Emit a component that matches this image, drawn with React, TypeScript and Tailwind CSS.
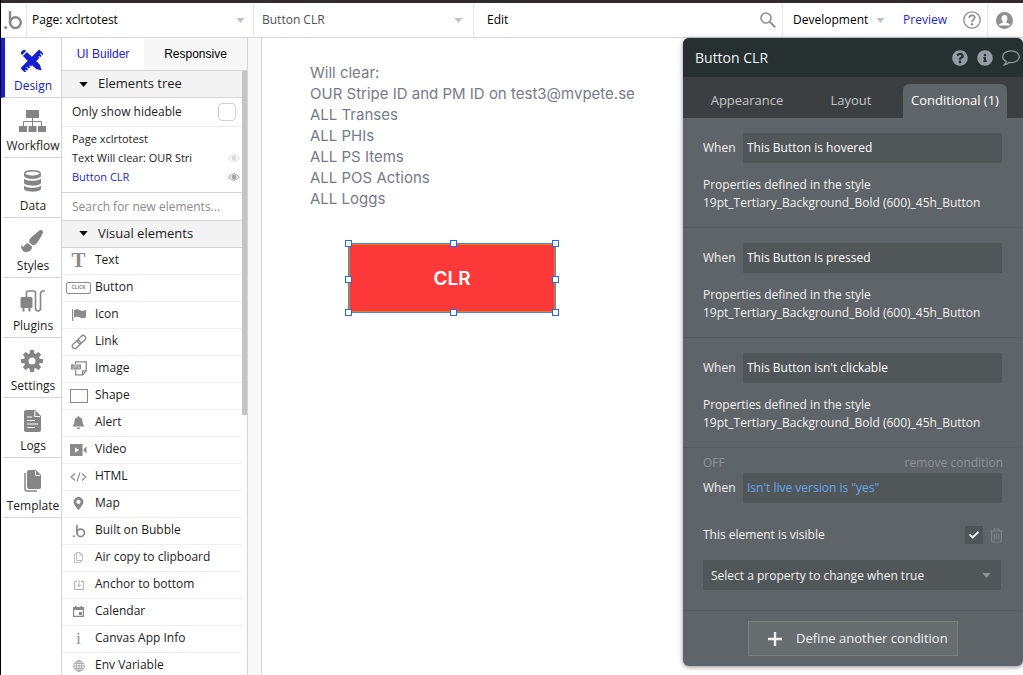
import React, { useState } from "react";
import {
  FaBell,
  FaCheck,
  FaInfoCircle,
  FaMapMarkerAlt,
  FaPaintBrush,
  FaQuestionCircle,
} from "react-icons/fa";

/* ICONS */

const Caret = ({ className = "" }: { className?: string }) => (
  <svg viewBox="0 0 10 6" className={`h-[5px] w-[9px] ${className}`} fill="currentColor">
    <path d="M0 0h10L5 6z" />
  </svg>
);

const BubbleLogo = ({ size = 20 }: { size?: number }) => (
  <svg width={size} height={size} viewBox="0 0 20 20" fill="none" stroke="currentColor">
    <circle cx="12.4" cy="12.6" r="5.4" strokeWidth="2.5" />
    <path d="M7 1v11.6" strokeWidth="2.4" />
    <circle cx="2.7" cy="17.6" r="1.5" fill="currentColor" stroke="none" />
  </svg>
);

const DesignIcon = () => (
  <svg width="22" height="22" viewBox="0 0 22 22" fill="currentColor">
    <g transform="rotate(-45 11 11)">
      <path d="M8.2-1.6q0-1.4 1.4-1.4h2.8q1.4 0 1.4 1.4v1.4H8.2zM8.2 1h5.6v18.6L11 24.6l-2.8-5z" />
    </g>
    <g transform="rotate(45 11 11)">
      <path stroke="#fff" strokeWidth="0.8" d="M7.6-2.6h6.8v27.2H7.6z" />
      <path stroke="#fff" strokeWidth="1" d="M11.5 0h3M12.5 3h2M11.5 19h3M12.5 22h2M12.5 16h2" />
    </g>
    <path transform="rotate(-45 11 11)" d="M8.2 5h5.6v12H8.2z" />
  </svg>
);

const WorkflowIcon = () => (
  <svg width="27" height="22" viewBox="0 0 27 22" fill="currentColor">
    <path d="M7 0h13v8H7zM0 16h8v6H0zM9.500 16h8v6h-8zM19 16h8v6h-8z" />
    <path fill="none" stroke="currentColor" d="M13.500 8v8M4.500 16v-4.500h18V16" />
  </svg>
);

const DataIcon = () => (
  <svg width="17" height="22" viewBox="0 0 17 22" fill="currentColor">
    <path d="M0 3.500v2C0 10 17 10 17 5.500v-2z" />
    <ellipse cx="8.500" cy="3.500" rx="7.700" ry="2.700" fill="#fff" stroke="currentColor" strokeWidth="1.500" />
    <path d="M0 8.500c2 3 15 3 17 0v4c0 4.200-17 4.200-17 0zM0 15.500c2 3 15 3 17 0v3c0 4.200-17 4.200-17 0z" />
  </svg>
);

const PluginsIcon = () => (
  <svg width="25" height="22" viewBox="0 0 25 22" fill="none" stroke="currentColor">
    <rect x="0.5" y="7" width="12" height="11" rx="1.5" fill="currentColor" stroke="none" />
    <path strokeWidth="2" d="M3.5 17v4.500M9.500 17v4.500" />
    <path strokeWidth="1.6" d="M6.500 8V3q0-2 2-2h5q2 0 2 2v15q0 3 2.500 3t2.500-3V4q0-3 3-3H25" />
  </svg>
);

const GearIcon = () => (
  <svg width="22" height="22" viewBox="0 0 22 22">
    <g fill="currentColor">
      <rect x="8.8" y="0" width="4.4" height="22" rx="1.2" />
      <rect x="8.8" y="0" width="4.4" height="22" rx="1.2" transform="rotate(45 11 11)" />
      <rect x="8.8" y="0" width="4.4" height="22" rx="1.2" transform="rotate(90 11 11)" />
      <rect x="8.8" y="0" width="4.4" height="22" rx="1.2" transform="rotate(135 11 11)" />
      <circle cx="11" cy="11" r="8" />
    </g>
    <circle cx="11" cy="11" r="3.5" fill="#fff" />
  </svg>
);

const LogsIcon = () => (
  <svg width="17" height="22" viewBox="0 0 17 22">
    <path fill="currentColor" d="M2 0h9l6 6v14q0 2-2 2H2q-2 0-2-2V2q0-2 2-2z" />
    <path fill="none" stroke="#fff" strokeWidth="1.1" d="M10.800 1v5.500H16M3 7h5M3 10.500h8M3 14h11M3 17.500h8" />
  </svg>
);

const TemplateIcon = () => (
  <svg width="17" height="22" viewBox="0 0 17 22">
    <path fill="none" stroke="currentColor" strokeWidth="1.5" d="M1 3v16.500q0 1.500 1.500 1.500H13" />
    <path fill="currentColor" d="M5 0h7l5 5v12q0 2-2 2H5q-2 0-2-2V2q0-2 2-2z" />
    <path fill="none" stroke="#fff" d="M11.500 1v4.500H16" />
  </svg>
);

const EyeIcon = ({ className = "" }: { className?: string }) => (
  <svg viewBox="0 0 12 8" className={`h-2 w-3 ${className}`} fill="none" stroke="currentColor">
    <path d="M.6 4Q6-2.600 11.400 4 6 10.600.6 4z" />
    <circle cx="6" cy="4" r="2" fill="currentColor" />
  </svg>
);

const FlagIcon = () => (
  <svg width="14" height="12" viewBox="0 0 14 12" fill="currentColor">
    <path d="M0 0h1.200v12H0zM2 1.200q3-1.700 6 0t6-.4v7.400q-3 2-6 .3t-6 .2z" />
  </svg>
);

const LinkIcon = () => (
  <svg width="16" height="16" viewBox="0 0 16 16" fill="none" stroke="currentColor" strokeWidth="1.4">
    <rect x="0.7" y="8" width="9.4" height="5" rx="2.5" transform="rotate(-45 5.4 10.5)" />
    <rect x="5.900" y="3" width="9.400" height="5" rx="2.500" transform="rotate(-45 10.600 5.500)" />
  </svg>
);

const ImageIcon = () => (
  <svg width="16" height="15" viewBox="0 0 16 15" fill="none" stroke="currentColor" strokeWidth="1.3">
    <path d="M4.600 3V.8h10.600v9l-3.500 4H4.600V9M15 9.800h-3.500v3.800" />
    <rect x="0" y="3.5" width="10" height="5" fill="currentColor" stroke="none" />
    <path stroke="#fff" strokeWidth="0.5" d="M2.300 4.500v2.800H1M4 7.500v-3h1.300v1.500H4M8.500 4.800H7v2.400h1.500V6" />
  </svg>
);

const VideoIcon = () => (
  <svg width="17" height="12" viewBox="0 0 17 12" fill="currentColor">
    <path fillRule="evenodd" d="M0 0h12.500v12H0zM5 3.500v5L9 6z" />
    <path d="M13 6l3.500-3.600v7.200z" />
  </svg>
);

const CodeIcon = () => (
  <svg width="17" height="10" viewBox="0 0 17 10" fill="none" stroke="currentColor" strokeWidth="1.1">
    <path d="M5 1.500L1 5l4 3.500M12 1.500L16 5l-4 3.500M10 .5l-3 9" />
  </svg>
);

const ClipboardIcon = () => (
  <svg width="9" height="11" viewBox="0 0 9 11" fill="none" stroke="#b5b5b5" strokeWidth="0.9">
    <path d="M2.500.5h3.500L8.500 3v5.500h-6zM6 .5V3h2.500M2.500 2H.5v8.500h6v-2" />
  </svg>
);

const AnchorIcon = () => (
  <svg width="10" height="10" viewBox="0 0 10 10" fill="none" stroke="#a8a8a8" strokeWidth="0.9">
    <path d="M3 1.500H.5v8h9v-8H7M5 0v6.500M3 4.700l2 2 2-2" />
  </svg>
);

const CalendarIcon = () => (
  <svg width="11" height="11" viewBox="0 0 11 11">
    <path fill="none" stroke="currentColor" strokeWidth="1.2" d="M.6 1.600h9.800v8.800H.6z" />
    <path fill="currentColor" d="M0 1h11v3H0zM2 0h1.500v1H2zM7.500 0H9v1H7.500zM6 6h3v3H6z" />
  </svg>
);

const GlobeIcon = () => (
  <svg width="12" height="12" viewBox="0 0 12 12" fill="none" stroke="#999" strokeWidth="0.8">
    <circle cx="6" cy="6" r="5.3" />
    <ellipse cx="6" cy="6" rx="2.6" ry="5.3" />
    <path d="M6 .7v10.600M.7 6h10.600M1.500 3.400h9M1.500 8.600h9" />
  </svg>
);

const SearchIcon = () => (
  <svg width="16" height="16" viewBox="0 0 16 16" fill="none" stroke="currentColor">
    <circle cx="6" cy="6" r="5" strokeWidth="1.6" />
    <path strokeWidth="2" d="M9.700 9.700l5.500 5.500" />
  </svg>
);

const HelpIcon = () => (
  <svg width="18" height="18" viewBox="0 0 18 18" fill="none" stroke="currentColor">
    <circle cx="9" cy="9" r="8.2" strokeWidth="1.3" />
    <path strokeWidth="1.7" d="M6.200 7q.2-2.700 2.900-2.700 2.600 0 2.600 2.300 0 1.300-1.400 2.200Q9 9.600 9 11" />
    <circle cx="9" cy="13.3" r="1.2" fill="currentColor" stroke="none" />
  </svg>
);

const AvatarIcon = () => (
  <svg width="17" height="17" viewBox="0 0 17 17">
    <circle cx="8.5" cy="8.5" r="8.5" fill="currentColor" />
    <ellipse cx="8.5" cy="6.5" rx="2.9" ry="3.5" fill="#fff" />
    <path fill="#fff" d="M6.900 9h3.200v1.500l3.400 1.500q.8.500.5 1.600H3q-.3-1.100.5-1.600l3.400-1.500z" />
  </svg>
);

const CommentIcon = () => (
  <svg width="18" height="16" viewBox="0 0 18 16" fill="none" stroke="currentColor" strokeWidth="1.3">
    <path d="M4.300 11.400Q.7 9.700.7 6.700C.7 3.300 4.400.8 9 .8s8.300 2.500 8.300 5.900-3.700 5.900-8.300 5.900q-1 0-2-.2-1.700 1.900-4.600 2.400 1.700-1.600 1.900-3.400z" />
  </svg>
);

const TrashIcon = () => (
  <svg width="13" height="15" viewBox="0 0 13 15" fill="none" stroke="currentColor" strokeWidth="1.2">
    <path d="M0 3h13M4.200 3V1h4.600v2M1.600 3v9.500q0 1.500 1.500 1.500h6.800q1.500 0 1.500-1.500V3M4.300 5.500v6M6.500 5.500v6M8.700 5.500v6" />
  </svg>
);

const PlusIcon = () => (
  <svg width="14" height="14" viewBox="0 0 14 14" stroke="currentColor" strokeWidth="2.4">
    <path d="M7 0v14M0 7h14" />
  </svg>
);

/* DATA */

const railItems = [
  { label: "Design", icon: <DesignIcon /> },
  { label: "Workflow", icon: <WorkflowIcon /> },
  { label: "Data", icon: <DataIcon /> },
  { label: "Styles", icon: <FaPaintBrush size={22} /> },
  { label: "Plugins", icon: <PluginsIcon /> },
  { label: "Settings", icon: <GearIcon /> },
  { label: "Logs", icon: <LogsIcon /> },
  { label: "Template", icon: <TemplateIcon /> },
];

const elements = [
  { label: "Text", icon: <span className="font-['Liberation_Serif',serif] text-[21px] font-bold">T</span> },
  {
    label: "Button",
    icon: (
      <span className="flex h-3 w-[25px] items-center justify-center rounded-xs border border-[#8a8a8a] text-[5px] font-bold">
        CLICK
      </span>
    ),
  },
  { label: "Icon", icon: <FlagIcon /> },
  { label: "Link", icon: <LinkIcon /> },
  { label: "Image", icon: <ImageIcon /> },
  { label: "Shape", icon: <span className="h-[14px] w-[18px] border border-[#8a8a8a]" /> },
  { label: "Alert", icon: <FaBell size={13} /> },
  { label: "Video", icon: <VideoIcon /> },
  { label: "HTML", icon: <CodeIcon /> },
  { label: "Map", icon: <FaMapMarkerAlt size={13} /> },
  { label: "Built on Bubble", icon: <BubbleLogo size={14} /> },
  { label: "Air copy to clipboard", icon: <ClipboardIcon /> },
  { label: "Anchor to bottom", icon: <AnchorIcon /> },
  { label: "Calendar", icon: <CalendarIcon /> },
  { label: "Canvas App Info", icon: <span className="font-['Liberation_Serif',serif] text-[16px]">i</span> },
  { label: "Env Variable", icon: <GlobeIcon /> },
];

const styleConditions = ["This Button is hovered", "This Button is pressed", "This Button isn't clickable"];

const clearedItems = [
  "Will clear:",
  "OUR Stripe ID and PM ID on test3@mvpete.se",
  "ALL Transes",
  "ALL PHIs",
  "ALL PS Items",
  "ALL POS Actions",
  "ALL Loggs",
];

const handles = [
  "-left-1 -top-1",
  "left-1/2 -top-1 -ml-0.5",
  "-right-1 -top-1",
  "-left-1 top-1/2 -mt-0.5",
  "-right-1 top-1/2 -mt-0.5",
  "-left-1 -bottom-1",
  "left-1/2 -bottom-1 -ml-0.5",
  "-right-1 -bottom-1",
];

/* SECTIONS */

const TopBar = () => (
  <header className="flex h-[38px] shrink-0 items-stretch border-b border-t-3 border-b-[#d5d5d5] border-t-[#2e2c2d] bg-white text-[12px]">
    <a href="#home" aria-label="Home" className="flex w-[25px] items-center pl-[2px] text-[#8a8a8a]">
      <BubbleLogo size={20} />
    </a>
    <div className="relative flex w-[228px] items-center border-x border-[#e8e8e8]">
      <select aria-label="Page" className="h-full w-full appearance-none pl-[5px] text-black outline-none">
        <option>Page: xclrtotest</option>
      </select>
      <Caret className="pointer-events-none absolute right-2 text-[#b9c5cb]" />
    </div>
    <div className="relative flex w-[220px] items-center border-r border-[#e8e8e8]">
      <select aria-label="Element" className="h-full w-full appearance-none pl-2 text-[#4a5355] outline-none">
        <option>Button CLR</option>
      </select>
      <Caret className="pointer-events-none absolute right-[10px] text-[#b9c5cb]" />
    </div>
    <button className="px-[13px] text-black">Edit</button>
    <button aria-label="Search" className="ml-auto border-r border-[#e8e8e8] pr-[6px] text-[#8f8f8f]">
      <SearchIcon />
    </button>
    <div className="relative flex w-[102px] items-center">
      <select aria-label="Version" className="h-full w-full appearance-none pl-[10px] text-black outline-none">
        <option>Development</option>
      </select>
      <Caret className="pointer-events-none absolute right-0 text-[#b9c5cb]" />
    </div>
    <a href="#preview" className="flex items-center pl-[18px] text-[#2329d6]">
      Preview
    </a>
    <button aria-label="Help" className="ml-4 border-r border-[#e8e8e8] pr-[6px] text-[#8f8f8f]">
      <HelpIcon />
    </button>
    <button aria-label="Account" className="pl-2 pr-[10px] text-[#8f8f8f]">
      <AvatarIcon />
    </button>
  </header>
);

const Rail = () => (
  <nav className="w-[61px] shrink-0 overflow-hidden border-r border-[#d5d5d5]">
    {railItems.map((item, i) => (
      <a
        key={item.label}
        href={`#${item.label.toLowerCase()}`}
        className={`flex h-[60px] flex-col items-center border-b border-l-4 border-b-[#d5d5d5] text-[12px] ${
          i === 0 ? "border-l-[#1420d0] text-[#1420d0]" : "border-l-transparent text-[#858585]"
        }`}
      >
        <span className="mt-3 flex h-[22px] items-center pr-[2px]">{item.icon}</span>
        <span className={`mt-1 leading-5 ${i === 0 ? "" : "text-[#1c1c1c]"}`}>{item.label}</span>
      </a>
    ))}
  </nav>
);

const SectionTitle = ({ children }: { children: React.ReactNode }) => (
  <button className="flex h-[27px] w-full items-center gap-[10px] border-b border-[#d5d5d5] bg-[#f3f3f3] pl-[17px] text-[13px] text-[#1c1c1c]">
    <Caret className="text-black" />
    {children}
  </button>
);

const ElementsPanel = () => {
  const [search, setSearch] = useState("");

  return (
    <aside className="flex w-[186px] shrink-0 flex-col border-r border-[#d5d5d5]">
      <div className="flex h-[33px] shrink-0 border-b border-[#d5d5d5] font-['Liberation_Sans',Arial,sans-serif] text-[12px]">
        <button className="w-[82px] text-[#1c22d4]">UI Builder</button>
        <button className="flex-1 bg-[#f7f7f7] text-black">Responsive</button>
      </div>

      <div className="flex min-h-0 flex-1">
        <div className="min-w-0 flex-1 overflow-hidden">
          <SectionTitle>Elements tree</SectionTitle>

          <label className="flex h-[29px] items-center justify-between border-b border-[#ededed] pl-[10px] pr-[6px] text-[12px]">
            Only show hideable
            <input type="checkbox" className="size-[18px] appearance-none rounded border border-[#d0d0d0]" />
          </label>

          {/* TREE */}
          <ul className="flex h-[66px] flex-col border-b border-[#d5d5d5] pl-[10px] pt-[2px] text-[11px] leading-[19px]">
            <li>Page xclrtotest</li>
            <li className="flex items-center justify-between pr-[2px]">
              Text Will clear: OUR Stri
              <EyeIcon className="text-[#dadada]" />
            </li>
            <li className="flex items-center justify-between pr-[2px] text-[#2329d6]">
              Button CLR
              <EyeIcon className="text-[#a2a2a2]" />
            </li>
          </ul>

          <input
            aria-label="Search for new elements"
            placeholder="Search for new elements..."
            className="h-[27px] w-full border-b border-[#d5d5d5] pl-[10px] text-[12px] outline-none placeholder:text-[#8a8a8a]"
            value={search}
            onChange={(e) => setSearch(e.target.value)}
          />

          <SectionTitle>Visual elements</SectionTitle>
          <ul>
            {elements
              .filter((el) => el.label.toLowerCase().includes(search.toLowerCase()))
              .map((el) => (
                <li key={el.label} className="flex h-[27px] items-center border-b border-[#efefef] text-[12px]">
                  <span className="flex w-[33px] items-center justify-center text-[#8a8a8a]">{el.icon}</span>
                  <span className="pb-[2px]">{el.label}</span>
                </li>
              ))}
          </ul>
        </div>
        <div className="w-[5px] shrink-0">
          <div className="h-[57%] bg-[#c4c4c4]" />
        </div>
      </div>
    </aside>
  );
};

const Canvas = () => (
  <main className="min-w-0 flex-1 overflow-hidden bg-white pl-12 pt-6">
    <div className="font-[Inter,sans-serif] text-[15px] leading-[21px] text-[#767a8a]">
      {clearedItems.map((line) => (
        <p key={line} className="whitespace-nowrap">
          {line}
        </p>
      ))}
    </div>
    <div className="relative ml-[38px] mt-[34px] h-[70px] w-[208px] border border-[#3b8fd8]">
      <button className="h-full w-full border border-[#d9801f] bg-[#fd3838] pt-[2px] font-[Inter,sans-serif] text-[19px] font-semibold text-white">
        CLR
      </button>
      {handles.map((position) => (
        <span key={position} className={`absolute size-[7px] border border-[#2268f5] bg-white ${position}`} />
      ))}
    </div>
  </main>
);

const WhenField = ({ id, value, className = "text-white" }: { id: string; value: string; className?: string }) => (
  <div className="flex h-[30px] items-center pr-px">
    <label htmlFor={id} className="w-10 shrink-0">
      When
    </label>
    <input
      id={id}
      defaultValue={value}
      className={`h-full min-w-0 flex-1 rounded-[1px] bg-[#515659] px-1 pb-[2px] outline-none ${className}`}
    />
  </div>
);

const PropertyEditor = () => {
  const [visible, setVisible] = useState(true);

  return (
    <section className="absolute right-0 top-0 w-[340px] rounded-md bg-[#5f6468] text-[12px] text-[#f2f2f2] shadow-[0_1px_5px_rgba(0,0,0,0.45)]">
      <div className="flex h-[39px] items-center rounded-t-md bg-[#273031] pl-3 pr-[3px]">
        <h2 className="flex-1 text-[14px]">Button CLR</h2>
        <div className="flex items-center gap-[9px] text-[#969da2]">
          <button aria-label="Help">
            <FaQuestionCircle size={16} />
          </button>
          <button aria-label="Info">
            <FaInfoCircle size={16} />
          </button>
          <button aria-label="Comment">
            <CommentIcon />
          </button>
        </div>
      </div>

      {/* TABS */}
      <div className="flex h-[41px] items-end bg-[#3b3f42] pr-4 text-[13px] text-[#c4c7c9]">
        <button className="h-[34px] w-32">Appearance</button>
        <button className="h-[34px] w-20">Layout</button>
        <button className="ml-auto h-[34px] w-[104px] rounded-t-md bg-[#5f6468] text-white">Conditional (1)</button>
      </div>

      {styleConditions.map((condition, i) => (
        <div key={condition} className="h-[110px] border-b border-[#565b5e] px-5 pt-[15px]">
          <WhenField id={`when-${i}`} value={condition} />
          <p className="mt-[13px] leading-[18px]">
            Properties defined in the style 19pt_Tertiary_Background_Bold (600)_45h_Button
          </p>
        </div>
      ))}

      <div className="border-b border-[#565b5e] px-5 pb-5 pt-[5px]">
        <div className="flex h-5 items-center justify-between text-[#8e9397]">
          <button>OFF</button>
          <button>remove condition</button>
        </div>
        <WhenField id="when-custom" value={'Isn\'t live version is "yes"'} className="text-[#64a8ee]" />
        <div className="mt-[22px] flex h-5 items-center">
          <label htmlFor="visible" className="flex-1">
            This element is visible
          </label>
          <span className="grid size-[18px] place-items-center">
            <input
              id="visible"
              type="checkbox"
              checked={visible}
              onChange={(e) => setVisible(e.target.checked)}
              className="col-start-1 row-start-1 size-[18px] appearance-none bg-[#4f5457]"
            />
            {visible && <FaCheck size={10} className="pointer-events-none col-start-1 row-start-1" />}
          </span>
          <button aria-label="Delete property" className="ml-[7px] text-[#7f8488]">
            <TrashIcon />
          </button>
        </div>
        <div className="relative mr-[2px] mt-[15px] flex h-[30px] items-center">
          <select
            aria-label="Property to change"
            className="h-full w-full appearance-none rounded-[1px] bg-[#515659] pl-2 pt-[2px] outline-none"
          >
            <option>Select a property to change when true</option>
          </select>
          <Caret className="pointer-events-none absolute right-[10px] text-[#8e9397]" />
        </div>
      </div>

      <div className="flex justify-center py-[10px]">
        <button className="flex h-[35px] w-[210px] items-center gap-[14px] border border-[#7a7f82] bg-[#686d70] pl-[19px] text-[13px]">
          <PlusIcon />
          Define another condition
        </button>
      </div>
    </section>
  );
};

export default function App() {
  return (
    <div className="flex h-screen flex-col overflow-hidden border-l border-black bg-white font-['Open_Sans',sans-serif] text-[#1c1c1c]">
      <TopBar />
      <div className="relative flex min-h-0 flex-1">
        <Rail />
        <ElementsPanel />
        <div className="w-[14px] shrink-0 border-r border-[#d5d5d5] bg-[#f8f8f8]" />
        <Canvas />
        <PropertyEditor />
      </div>
    </div>
  );
}
